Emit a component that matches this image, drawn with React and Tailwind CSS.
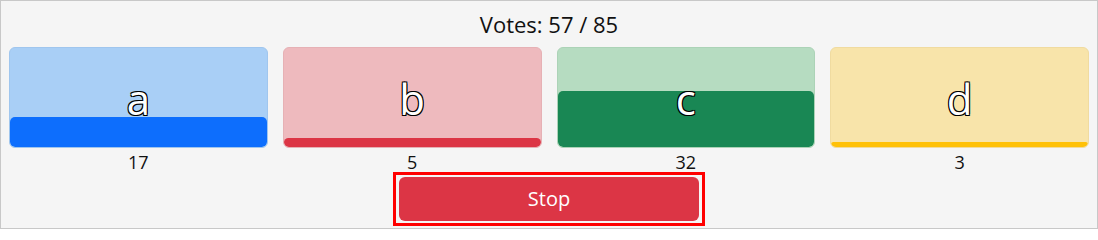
const options = [
  { label: 'a', votes: 17, light: 'bg-[#a9cff6] border-[#a0c6ee]', bar: 'bg-[#0d6efd]' },
  { label: 'b', votes: 5, light: 'bg-[#eebabe] border-[#e6b1b5]', bar: 'bg-[#dc3545]' },
  { label: 'c', votes: 32, light: 'bg-[#b6dcc1] border-[#acd3b7]', bar: 'bg-[#198754]' },
  { label: 'd', votes: 3, light: 'bg-[#f8e4aa] border-[#f0dba0]', bar: 'bg-[#ffc107]' },
];

const outline = {
  textShadow: '1px 1px 0 #000, -1px -1px 0 #000, 1px -1px 0 #000, -1px 1px 0 #000',
};

export default function App() {
  const voted = options.reduce((s, o) => s + o.votes, 0);

  return (
    <div
      className="h-[229px] w-[1098px] border border-[#c8c8c8] bg-[#f5f5f5] px-2 pt-2 font-medium text-[#111] box-border"
      style={{ fontFamily: '"Open Sans", "Noto Sans", sans-serif' }}
    >
      <div className="h-[30px] text-center text-[22px] leading-[30px]">Votes: {voted} / 85</div>

      <div className="mt-2 grid grid-cols-4 gap-[15px]">
        {options.map((o) => (
          <div key={o.label} className="flex flex-col items-center">
            <div className={`relative flex h-[101px] w-full flex-col justify-end overflow-hidden rounded-md border ${o.light}`}>
              <div
                className={`w-full rounded-[5px] ${o.bar}`}
                style={{ height: `${(o.votes / voted) * 100}%` }}
              />
              <div
                className="absolute inset-0 flex items-center justify-center pt-[2px] text-[42px] leading-none text-white"
                style={outline}
              >
                {o.label}
              </div>
            </div>
            <div className="mt-1 text-[18px] leading-5">{o.votes}</div>
          </div>
        ))}
      </div>

      <div className="flex justify-center">
        <div className="border-3 border-[#ff0000] px-[3px] py-[2px]">
          <button
            type="button"
            className="block h-[44px] w-[300px] rounded-md bg-[#dc3545] text-[20px] font-normal text-white"
          >
            Stop
          </button>
        </div>
      </div>
    </div>
  );
}
